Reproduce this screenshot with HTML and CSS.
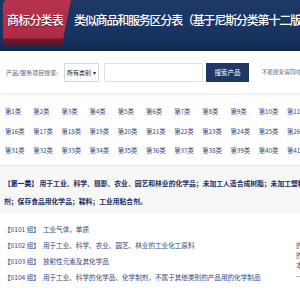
FILE: index.html
```html
<!DOCTYPE html>
<html lang="zh-CN">
<head>
    <meta charset="UTF-8">
    <meta name="viewport" content="width=device-width, initial-scale=1.0">
    <title>商标分类表</title>
    <link rel="stylesheet" href="styles.css">
</head>
<body>
    <div id="page">
        <div id="header">
            <div class="logo"><span>商标分类表</span></div>
            <h1 class="title">类似商品和服务区分表（基于尼斯分类第十二版）</h1>
        </div>

        <div id="search">
            <label for="keyword">产品/服务项目搜索:</label>
            <div class="select-wrap">
                <select id="category">
                    <option>所有类别</option>
                </select>
            </div>
            <input type="text" id="keyword">
            <button>搜索产品</button>
            <span class="note">不能搜索请同时按住Ctrl和F键进行页面搜索</span>
        </div>

        <div id="class-list"></div>

        <div id="content">
            <div class="main">
                <div class="class-title">
                    <b>【第一类】</b> 用于工业、科学、摄影、农业、园艺和林业的化学品；未加工人造合成树脂；未加工塑料物质；肥料；灭火用合成物；淬火和焊接用制剂；保存食品用化学品；鞣料；工业用粘合剂。
                </div>
                <ul class="groups">
                    <li><span class="code">【0101 组】</span>工业气体，单质</li>
                    <li><span class="code">【0102 组】</span>用于工业、科学、农业、园艺、林业的工业化工原料</li>
                    <li><span class="code">【0103 组】</span>放射性元素及其化学品</li>
                    <li><span class="code">【0104 组】</span>用于工业、科学的化学品、化学制剂，不属于其他类别的产品用的化学制品</li>
                </ul>
            </div>
            <div class="side">
                <p>的</p>
                <p>的</p>
                <p>本</p>
                <p>—</p>
            </div>
        </div>
    </div>

    <script>
        // 生成第1类到第45类的链接
        const list = document.getElementById('class-list');
        for (let i = 1; i <= 45; i++) {
            const a = document.createElement('a');
            a.href = '#c' + i;
            a.textContent = `第${i}类`;
            list.appendChild(a);
        }
    </script>
</body>
</html>
```

FILE: styles.css
```css
body {
    margin: 0;
    font-family: "Noto Sans CJK SC", "Noto Sans", sans-serif;
    background-color: #fff;
    overflow: hidden;
}
#page {
    width: 470px;
}
#header {
    display: flex;
    align-items: flex-start;
    height: 51px;
    background: linear-gradient(180deg, #1c3965 0%, #183360 70%, #132b52 100%);
    border-bottom: 1px solid #0e2246;
    box-sizing: border-box;
}
.logo {
    width: 68px;
    height: 45px;
    margin-left: 3px;
    background: linear-gradient(180deg, #b7324c 0%, #b02c46 85%, #6f1b2e 86%, #5d1525 100%);
    clip-path: polygon(2px 0, 68px 0, 59px 45px, 0 45px, 0 4px);
    display: flex;
    justify-content: center;
    padding-top: 11px;
    box-sizing: border-box;
}
.logo span {
    color: #fff;
    font-size: 12px;
    letter-spacing: -0.8px;
    font-weight: 500;
    text-shadow: 0 1px 1px rgba(0, 0, 0, 0.4);
    padding-right: 4px;
}
.title {
    margin: 11px 0 0 3px;
    color: #fff;
    font-size: 12px;
    font-weight: 500;
    letter-spacing: -1.2px;
    white-space: nowrap;
}
#search {
    display: flex;
    align-items: center;
    height: 42px;
    padding-left: 6px;
    background-color: #fff;
    box-shadow: 0 2px 4px rgba(0, 0, 0, 0.08);
    position: relative;
    font-size: 6px;
    color: #55638a;
}
#search label {
    margin-right: 6px;
}
.select-wrap {
    position: relative;
    width: 35px;
    height: 19px;
}
.select-wrap::after {
    content: "▾";
    position: absolute;
    right: 3px;
    top: 5px;
    font-size: 6px;
    color: #333;
    pointer-events: none;
}
#search select {
    appearance: none;
    width: 35px;
    height: 19px;
    font-size: 6px;
    font-family: inherit;
    padding: 0 2px;
    border: 1px solid #d4d4d4;
    border-radius: 1px;
    background: #fff;
    color: #222;
}
#search input {
    width: 99px;
    height: 19px;
    margin-left: 5px;
    padding: 0;
    border: 1px solid #e1e1e1;
    box-sizing: border-box;
}
#search button {
    width: 43px;
    height: 19px;
    margin-left: 3px;
    padding: 0;
    border: none;
    background-color: #1d3a66;
    color: #fff;
    font-size: 6.5px;
    font-family: inherit;
}
#search .note {
    margin-left: 13px;
    font-size: 5.5px;
    white-space: nowrap;
}
#class-list {
    display: grid;
    grid-template-columns: repeat(15, 28.2px);
    grid-auto-rows: 19.5px;
    align-items: center;
    padding: 9px 0 4px 5px;
}
#class-list a {
    font-size: 6.3px;
    color: #34497a;
    text-decoration: none;
    white-space: nowrap;
}
#content {
    display: flex;
}
.main {
    width: 448px;
    flex-shrink: 0;
}
.class-title {
    padding: 8px 4px 3px 4px;
    border-top: 1px solid #e8e8e8;
    background-color: #f7f7f8;
    font-size: 6.8px;
    line-height: 18px;
    font-weight: bold;
    color: #1d2f5d;
}
.groups {
    list-style: none;
    margin: 0;
    padding: 8px 0 0 4px;
}
.groups li {
    font-size: 6.6px;
    line-height: 16px;
    color: #34477a;
    white-space: nowrap;
}
.groups .code {
    margin-right: 3px;
}
.side {
    margin-left: -152px;
    padding-top: 75px;
}
.side p {
    margin: 0;
    font-size: 6.5px;
    line-height: 10px;
    color: #555;
}
```
